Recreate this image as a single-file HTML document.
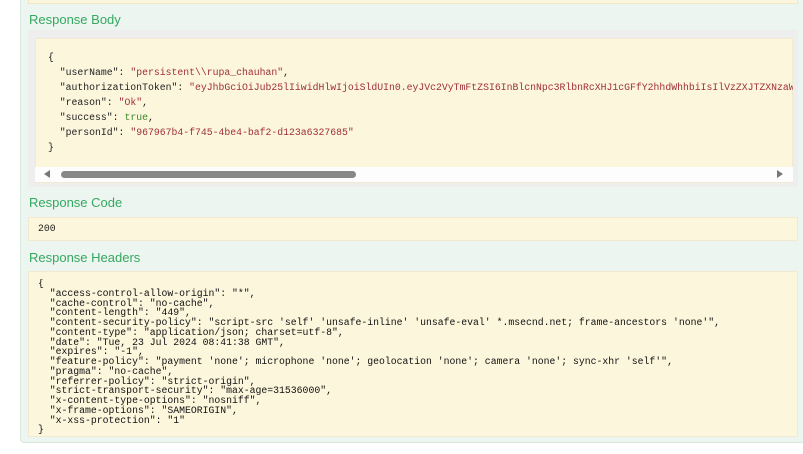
<!DOCTYPE html>
<html><head><style>
*{margin:0;padding:0;box-sizing:border-box}
body{width:803px;height:454px;background:#fff;position:relative;overflow:hidden;font-family:"Liberation Sans",sans-serif}
.panel{position:absolute;left:20px;top:-10px;width:790px;height:453px;background:#ecf5ef;border:1px solid #d8eadd;border-radius:4px}
.top{position:absolute;left:28px;top:-5px;width:770px;height:9px;background:#fcf6dc;border:1px solid #f0e6c4}
h4{position:absolute;left:29px;font-weight:normal;font-size:13px;color:#35a860}
.gray{position:absolute;left:28px;top:30px;width:770px;height:157px;background:#eeeeee}
.yel{position:absolute;background:#fcf6dc;border:1px solid #f2ead0}
pre{font-family:"Liberation Mono",monospace;white-space:pre;overflow:hidden}
.s{color:#a0303a}.b{color:#3a8a2a}
.sb{position:absolute;left:35px;top:167px;width:758px;height:15px;background:#fdfdfd}
.thumb{position:absolute;left:61px;top:171px;width:295px;height:7px;background:#888;border-radius:4px}
</style></head><body>
<div class="panel"></div>
<div class="top"></div>
<h4 style="top:12px">Response Body</h4>
<div class="gray"></div>
<div class="yel" style="left:35px;top:38px;width:758px;height:145px"></div>
<pre style="position:absolute;left:48px;top:50px;width:745px;font-size:9.8px;line-height:15px;color:#222">{
  "userName": <span class="s">"persistent\\rupa_chauhan"</span>,
  "authorizationToken": <span class="s">"eyJhbGciOiJub25lIiwidHlwIjoiSldUIn0.eyJVc2VyTmFtZSI6InBlcnNpc3RlbnRcXHJ1cGFfY2hhdWhhbiIsIlVzZXJTZXNzaW</span>
  "reason": <span class="s">"Ok"</span>,
  "success": <span class="b">true</span>,
  "personId": <span class="s">"967967b4-f745-4be4-baf2-d123a6327685"</span>
}</pre>
<div class="sb"></div>
<div class="thumb"></div>
<div style="position:absolute;left:44px;top:170px;width:0;height:0;border-top:4px solid transparent;border-bottom:4px solid transparent;border-right:6px solid #777"></div>
<div style="position:absolute;left:777px;top:170px;width:0;height:0;border-top:4px solid transparent;border-bottom:4px solid transparent;border-left:6px solid #777"></div>
<h4 style="top:195px">Response Code</h4>
<div class="yel" style="left:28px;top:217px;width:770px;height:24px"></div>
<pre style="position:absolute;left:38px;top:223px;font-size:9.8px;line-height:12px;color:#222">200</pre>
<h4 style="top:250px">Response Headers</h4>
<div class="yel" style="left:28px;top:271px;width:770px;height:166px"></div>
<pre style="position:absolute;left:38px;top:279px;width:755px;font-size:9.8px;line-height:9.75px;color:#111">{
  "access-control-allow-origin": "*",
  "cache-control": "no-cache",
  "content-length": "449",
  "content-security-policy": "script-src 'self' 'unsafe-inline' 'unsafe-eval' *.msecnd.net; frame-ancestors 'none'",
  "content-type": "application/json; charset=utf-8",
  "date": "Tue, 23 Jul 2024 08:41:38 GMT",
  "expires": "-1",
  "feature-policy": "payment 'none'; microphone 'none'; geolocation 'none'; camera 'none'; sync-xhr 'self'",
  "pragma": "no-cache",
  "referrer-policy": "strict-origin",
  "strict-transport-security": "max-age=31536000",
  "x-content-type-options": "nosniff",
  "x-frame-options": "SAMEORIGIN",
  "x-xss-protection": "1"
}</pre>
</body></html>
